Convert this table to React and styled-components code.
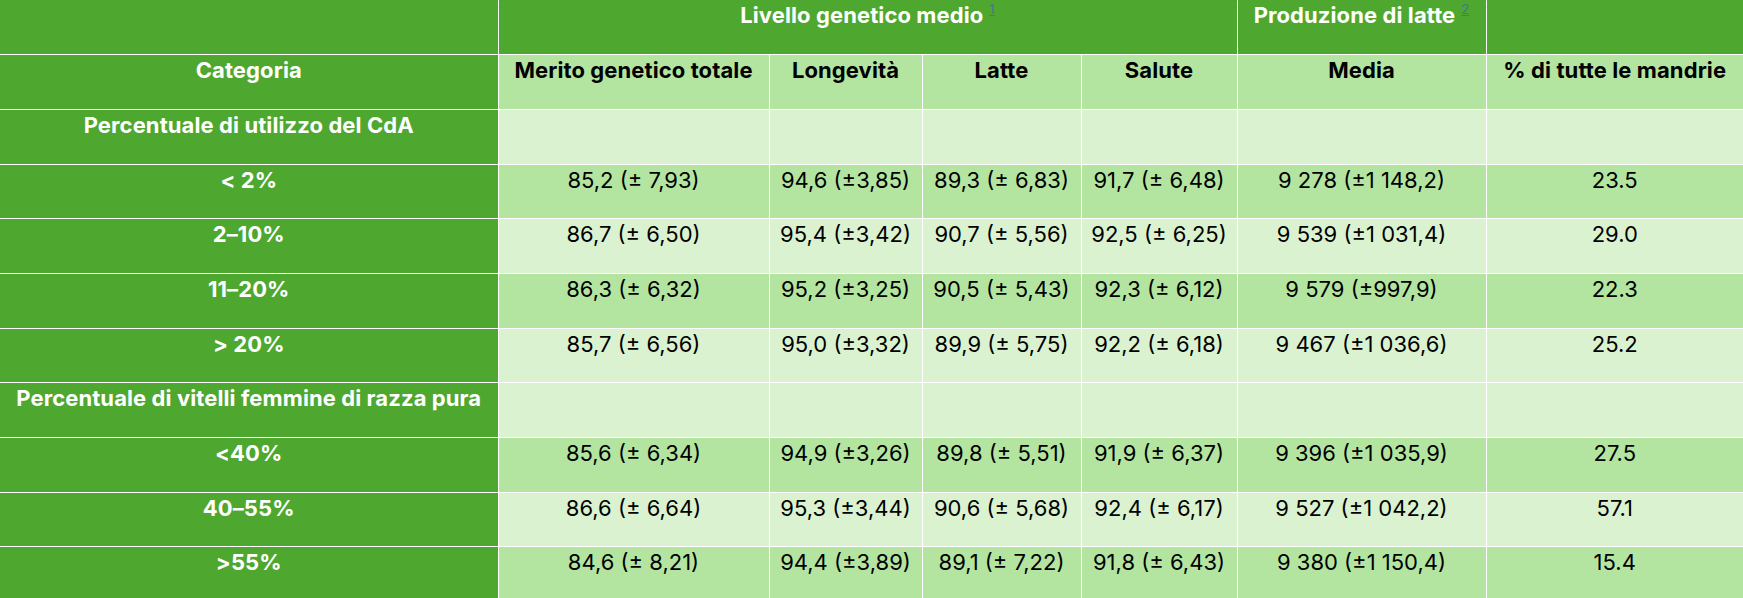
import React from 'react'
import styled, { createGlobalStyle } from 'styled-components'

const GlobalStyle = createGlobalStyle`
  body {
    margin: 0;
    background: #ffffff;
  }
`

const DARK = '#4ea72e'
const MID = '#b3e5a1'
const LIGHT = '#daf2d0'

const Table = styled.table`
  width: 1743px;
  border-collapse: collapse;
  table-layout: fixed;
  font-family: Inter, "Liberation Sans", sans-serif;
  font-size: 22px;
  line-height: 26px;
`

const Col = styled.col`
  width: ${p => p.$w}px;
`

const Row = styled.tr`
  height: 54.7px;
`

const Cell = styled.td`
  vertical-align: top;
  text-align: center;
  padding: 2px 4px 0;
  background: ${p => p.$tone === 'dark' ? DARK : p.$tone === 'mid' ? MID : LIGHT};
  color: ${p => p.$tone === 'dark' ? '#ffffff' : '#000000'};
  font-weight: ${p => p.$bold ? 700 : 400};
  letter-spacing: ${p => p.$bold ? '0.1px' : '0'};
  border-bottom: 1px solid #ffffff;
  border-right: ${p => p.$dotted ? '1px dotted #e4efe0' : '1px solid #ffffff'};
  white-space: nowrap;
  overflow: hidden;
  &:last-child {
    border-right: none;
  }
`

const Note = styled.sup`
  font-size: 13px;
  font-weight: 400;
  color: #467886;
  text-decoration: underline;
  margin-left: 6px;
  vertical-align: 9px;
  line-height: 0;
`

const widths = [498, 271, 153, 159, 156, 249, 257]

const heads = ['Merito genetico totale', 'Longevità', 'Latte', 'Salute', 'Media', '% di tutte le mandrie']

const rows = [
  { label: 'Percentuale di utilizzo del CdA', tone: 'light' },
  { label: '< 2%', tone: 'mid', values: ['85,2 (± 7,93)', '94,6 (±3,85)', '89,3 (± 6,83)', '91,7 (± 6,48)', '9 278 (±1 148,2)', '23.5'] },
  { label: '2–10%', tone: 'light', values: ['86,7 (± 6,50)', '95,4 (±3,42)', '90,7 (± 5,56)', '92,5 (± 6,25)', '9 539 (±1 031,4)', '29.0'] },
  { label: '11–20%', tone: 'mid', values: ['86,3 (± 6,32)', '95,2 (±3,25)', '90,5 (± 5,43)', '92,3 (± 6,12)', '9 579 (±997,9)', '22.3'] },
  { label: '> 20%', tone: 'light', values: ['85,7 (± 6,56)', '95,0 (±3,32)', '89,9 (± 5,75)', '92,2 (± 6,18)', '9 467 (±1 036,6)', '25.2'] },
  { label: 'Percentuale di vitelli femmine di razza pura', tone: 'light' },
  { label: '<40%', tone: 'mid', values: ['85,6 (± 6,34)', '94,9 (±3,26)', '89,8 (± 5,51)', '91,9 (± 6,37)', '9 396 (±1 035,9)', '27.5'] },
  { label: '40–55%', tone: 'light', values: ['86,6 (± 6,64)', '95,3 (±3,44)', '90,6 (± 5,68)', '92,4 (± 6,17)', '9 527 (±1 042,2)', '57.1'] },
  { label: '>55%', tone: 'mid', values: ['84,6 (± 8,21)', '94,4 (±3,89)', '89,1 (± 7,22)', '91,8 (± 6,43)', '9 380 (±1 150,4)', '15.4'] },
]

export default function App() {
  return (
    <>
      <GlobalStyle />
      <Table>
        <colgroup>
          {widths.map((w, i) => <Col key={i} $w={w} />)}
        </colgroup>
        <tbody>
          <Row>
            <Cell $tone="dark" $dotted />
            <Cell $tone="dark" $bold $dotted colSpan={4}>
              Livello genetico medio<Note>1</Note>
            </Cell>
            <Cell $tone="dark" $bold $dotted>
              Produzione di latte<Note>2</Note>
            </Cell>
            <Cell $tone="dark" />
          </Row>
          <Row>
            <Cell $tone="dark" $bold>Categoria</Cell>
            {heads.map(h => <Cell key={h} $tone="mid" $bold>{h}</Cell>)}
          </Row>
          {rows.map(r => (
            <Row key={r.label}>
              <Cell $tone="dark" $bold>{r.label}</Cell>
              {(r.values || ['', '', '', '', '', '']).map((v, i) => (
                <Cell key={i} $tone={r.tone}>{v}</Cell>
              ))}
            </Row>
          ))}
        </tbody>
      </Table>
    </>
  )
}
